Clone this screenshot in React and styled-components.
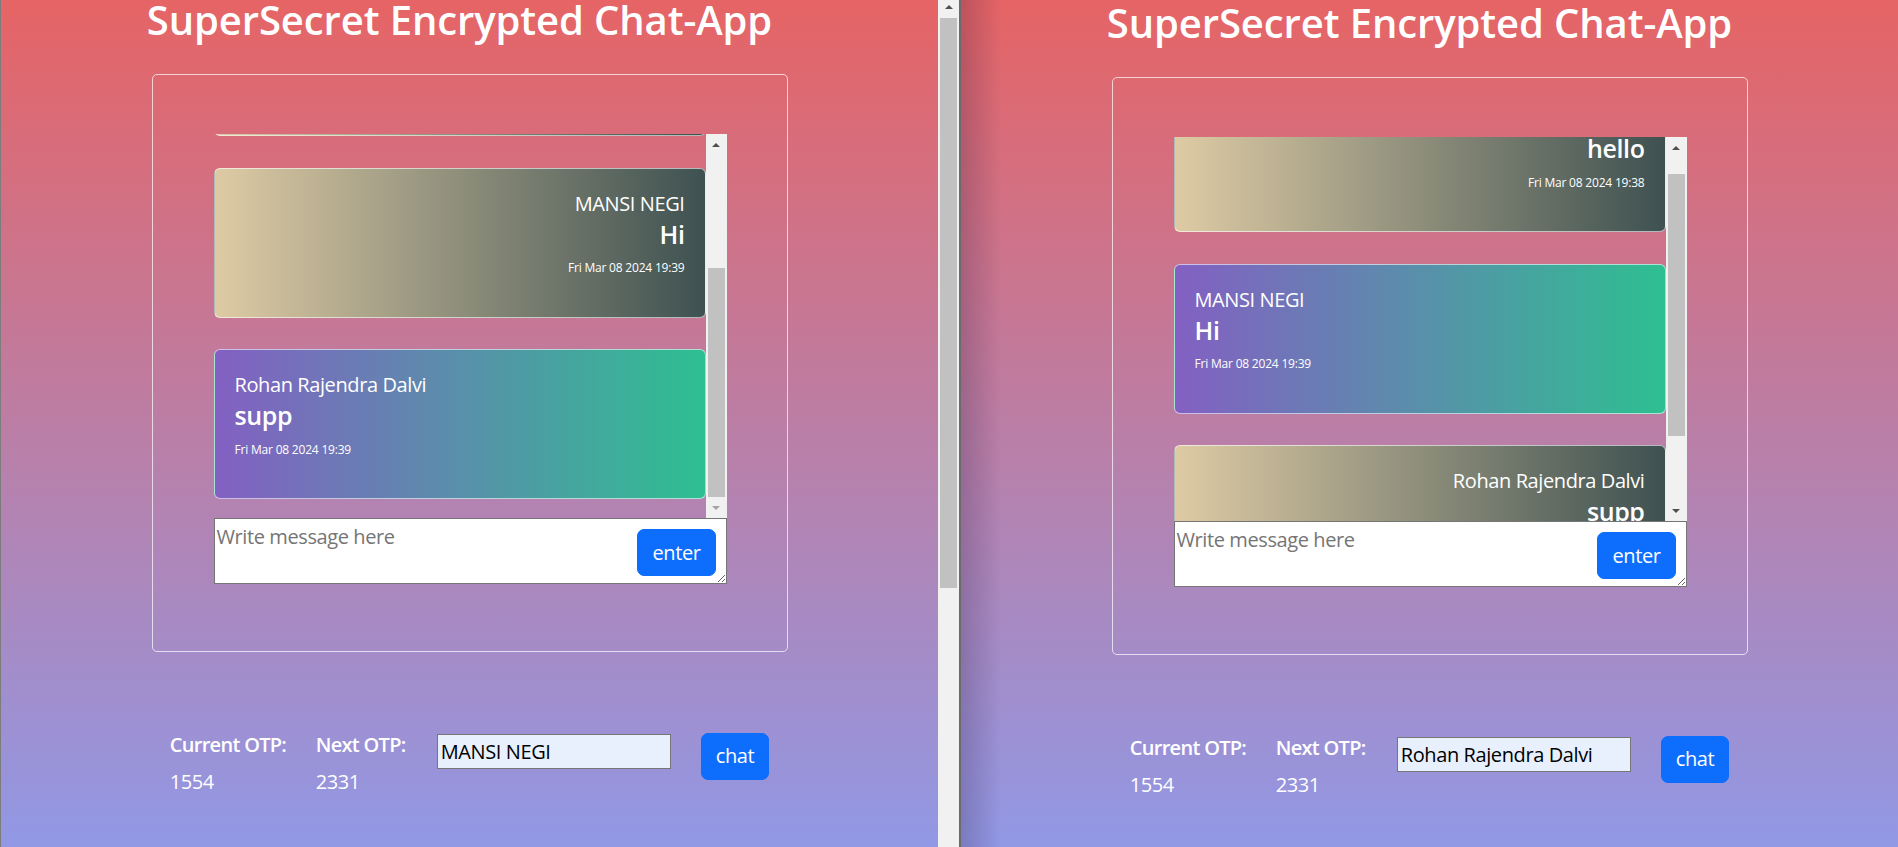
import React, { useLayoutEffect, useRef } from 'react';
import styled, { createGlobalStyle } from 'styled-components';

const GlobalStyle = createGlobalStyle`
    html, body {
        margin: 0;
        padding: 0;
        overflow: hidden;
    }
    body {
        font-family: "Open Sans", "Noto Sans", sans-serif;
        letter-spacing: -0.4px;
    }
    * {
        box-sizing: border-box;
    }
`

const PAGE_BG = 'linear-gradient(#e66465, #9198e5)';

/////

const Screen = styled.div`
    display: flex;
    width: 1898px;
    height: 847px;
    overflow: hidden;
`

const LeftWindow = styled.div`
    display: flex;
    flex: none;
    width: 959px;
    height: 100%;
    border-left: 1px solid #7c7c7c;
    background: ${PAGE_BG};
`

const Divider = styled.div`
    flex: none;
    width: 2px;
    background: #6b6b6b;
`

const RightWindow = styled.div`
    display: flex;
    flex: 1;
    height: 100%;
    background:
        linear-gradient(to right, rgba(40, 20, 60, 0.22), rgba(40, 20, 60, 0) 40px),
        ${PAGE_BG};
`

const Page = styled.div`
    flex: 1;
    min-width: 0;
    overflow: hidden;
    display: flex;
    flex-direction: column;
    align-items: center;
    padding-top: ${p => p.$offset || 0}px;
    color: #fff;
`

const Title = styled.h1`
    margin: 0;
    padding-right: 20px;
    font-size: 40px;
    font-weight: 600;
    line-height: 40px;
    letter-spacing: -0.1px;
    white-space: nowrap;
`

const ChatBox = styled.div`
    width: 636px;
    margin-top: 34px;
    padding: 59px 60px 67px 61px;
    border: 1px solid rgba(255, 255, 255, 0.7);
    border-radius: 5px;
`

const ChatArea = styled.div`
    display: flex;
    height: 384px;
`

const MessageList = styled.div`
    flex: 1;
    min-width: 0;
    overflow-y: auto;
    scrollbar-width: none;
    display: flex;
    flex-direction: column;
    gap: 31.5px;
    padding: 41px 0 20px;
    &::-webkit-scrollbar{
        display: none;
    }
`

const Bubble = styled.div`
    flex: none;
    height: 150px;
    padding: 20px;
    border: 1px solid rgba(255, 255, 255, 0.6);
    border-radius: 6px;
    text-align: ${p => p.$mine ? 'right' : 'left'};
    background: ${p => p.$mine
        ? 'linear-gradient(to right, #decba4, #3e5151)'
        : 'linear-gradient(to right, #8360c3, #2ebf91)'};
    .sender{
        font-size: 20px;
        line-height: 30px;
    }
    .text{
        font-size: 25px;
        font-weight: 600;
        line-height: 31px;
    }
    .time{
        margin-top: 8.5px;
        font-size: 12px;
        line-height: 20px;
        letter-spacing: -0.2px;
    }
`

// scrollbar drawn like the classic windows one
const ScrollBar = styled.div`
    flex: none;
    width: 21px;
    display: flex;
    flex-direction: column;
    background: #f1f1f1;
`

const ArrowButton = styled.div`
    flex: none;
    height: ${p => 21 - (p.$crop || 0)}px;
    padding-bottom: ${p => p.$crop || 0}px;
    display: flex;
    align-items: center;
    justify-content: center;
`

const Arrow = styled.div`
    width: 0;
    height: 0;
    border-left: 4.5px solid transparent;
    border-right: 4.5px solid transparent;
    ${p => p.$down
        ? `border-top: 4.5px solid ${p.$disabled ? '#a3a3a3' : '#505050'};`
        : `border-bottom: 4.5px solid ${p.$disabled ? '#a3a3a3' : '#505050'};`}
`

const Rail = styled.div`
    flex: 1;
    padding: 0 2px;
`

const Thumb = styled.div`
    margin-top: ${p => p.$top}px;
    height: ${p => p.$size}px;
    background: #c1c1c1;
`

const Composer = styled.div`
    position: relative;
    height: 66px;
`

const MessageInput = styled.textarea`
    display: block;
    width: 100%;
    height: 100%;
    margin: 0;
    padding: 4px 2px;
    border: 1px solid #767676;
    background: #fff;
    font-family: inherit;
    font-size: 20px;
    letter-spacing: -0.4px;
    color: #212529;
    &::placeholder{
        color: #757575;
    }
`

const BlueButton = styled.button`
    font-family: inherit;
    font-size: 20px;
    line-height: 30px;
    letter-spacing: -0.4px;
    padding: 7.5px ${p => p.$px || 15}px;
    color: #fff;
    background-color: #0d6efd;
    border: 1px solid #0d6efd;
    border-radius: 7px;
    cursor: pointer;
`

const EnterButton = styled(BlueButton)`
    position: absolute;
    top: 11px;
    right: 11px;
`

const OtpRow = styled.div`
    display: flex;
    align-items: flex-start;
    margin-top: 78px;
`

const OtpBlock = styled.div`
    width: ${p => p.$w}px;
    .label{
        font-size: 20px;
        font-weight: 600;
        line-height: 30px;
        letter-spacing: -0.7px;
    }
    .value{
        margin-top: 7px;
        font-size: 20px;
        line-height: 30px;
    }
`

const NameInput = styled.input`
    width: 234px;
    height: 35px;
    margin: 3.5px 30px 0 0;
    padding: 0 3px;
    border: 1px solid #767676;
    background: #e8f0fe;
    font-family: inherit;
    font-size: 20px;
    letter-spacing: -0.4px;
    color: #000;
`

const ChatButton = styled(BlueButton)`
    margin-top: 2.5px;
`

/////////////

const Scroller = ({ thumbTop, thumbSize, crop, noDown, downDisabled }) => (
    <ScrollBar>
        <ArrowButton $crop={crop}><Arrow /></ArrowButton>
        <Rail><Thumb $top={thumbTop} $size={thumbSize} /></Rail>
        {!noDown && <ArrowButton><Arrow $down $disabled={downDisabled} /></ArrowButton>}
    </ScrollBar>
);

const ChatWindow = ({ me, messages, scrollTop, thumbTop, thumbSize, downDisabled, offset }) => {

    const listRef = useRef(null);

    useLayoutEffect(() => {
        if (listRef.current) listRef.current.scrollTop = scrollTop;
    }, [scrollTop]);

    return (
        <Page $offset={offset}>
            <Title>SuperSecret Encrypted Chat-App</Title>

            <ChatBox>
                <ChatArea>
                    <MessageList ref={listRef}>
                        {messages.map((m, i) => (
                            <Bubble key={i} $mine={m.sender === me}>
                                <div className='sender'>{m.sender}</div>
                                <div className='text'>{m.text}</div>
                                <div className='time'>{m.time}</div>
                            </Bubble>
                        ))}
                    </MessageList>
                    <Scroller thumbTop={thumbTop} thumbSize={thumbSize} downDisabled={downDisabled} />
                </ChatArea>

                <Composer>
                    <MessageInput placeholder='Write message here' />
                    <EnterButton type='button' $px={14}>enter</EnterButton>
                </Composer>
            </ChatBox>

            <OtpRow>
                <OtpBlock $w={146}>
                    <div className='label'>Current OTP:</div>
                    <div className='value'>1554</div>
                </OtpBlock>
                <OtpBlock $w={121}>
                    <div className='label'>Next OTP:</div>
                    <div className='value'>2331</div>
                </OtpBlock>
                <NameInput defaultValue={me} />
                <ChatButton type='button' $px={14}>chat</ChatButton>
            </OtpRow>
        </Page>
    );
};

const ROHAN = 'Rohan Rajendra Dalvi';
const MANSI = 'MANSI NEGI';

const leftMessages = [
    { sender: MANSI, text: 'hey', time: 'Fri Mar 08 2024 19:38' },
    { sender: MANSI, text: 'Hi', time: 'Fri Mar 08 2024 19:39' },
    { sender: ROHAN, text: 'supp', time: 'Fri Mar 08 2024 19:39' },
];

const rightMessages = [
    { sender: ROHAN, text: 'hello', time: 'Fri Mar 08 2024 19:38' },
    { sender: MANSI, text: 'Hi', time: 'Fri Mar 08 2024 19:39' },
    { sender: ROHAN, text: 'supp', time: 'Fri Mar 08 2024 19:39' },
];

const App = () => {
    return (
        <>
            <GlobalStyle />
            <Screen>
                <LeftWindow>
                    <ChatWindow
                        me={MANSI}
                        messages={leftMessages}
                        scrollTop={189}
                        thumbTop={113}
                        thumbSize={229}
                        downDisabled />
                    <Scroller thumbTop={1} thumbSize={570} crop={4} noDown />
                </LeftWindow>
                <Divider />
                <RightWindow>
                    <ChatWindow
                        me={ROHAN}
                        messages={rightMessages}
                        scrollTop={96}
                        thumbTop={16}
                        thumbSize={262}
                        offset={3} />
                </RightWindow>
            </Screen>
        </>
    );
};

export default App;
